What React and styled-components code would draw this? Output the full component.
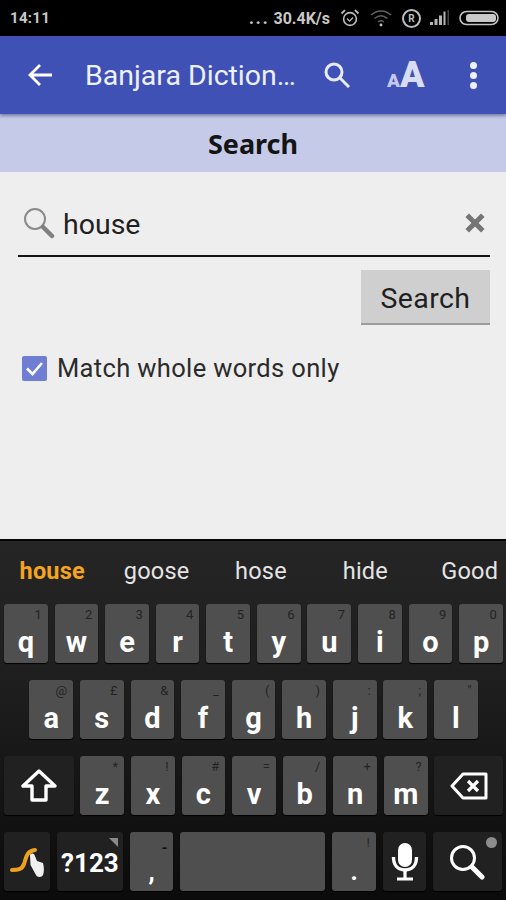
import React from "react";
import styled, { createGlobalStyle } from "styled-components";

const GlobalStyle = createGlobalStyle`
  html, body {
    margin: 0;
    padding: 0;
    background: #000;
  }
  * {
    box-sizing: border-box;
  }
`;

const ROW_1 = [
  ["q", "1"], ["w", "2"], ["e", "3"], ["r", "4"], ["t", "5"],
  ["y", "6"], ["u", "7"], ["i", "8"], ["o", "9"], ["p", "0"],
];
const ROW_2 = [
  ["a", "@"], ["s", "£"], ["d", "&"], ["f", "_"], ["g", "("],
  ["h", ")"], ["j", ":"], ["k", ";"], ["l", "\""],
];
const ROW_3 = [
  ["z", "*"], ["x", "!"], ["c", "#"], ["v", "="], ["b", "/"], ["n", "+"], ["m", "?"],
];
const SUGGESTIONS = ["house", "goose", "hose", "hide", "Good"];

function StatusIcons() {
  return (
    <>
      <svg width="20" height="20" viewBox="0 0 20 20" fill="none" stroke="#bdbdbd">
        <circle cx="10" cy="11" r="6.4" strokeWidth="1.6" />
        <path d="M7 10.5l2.6 2.6L13 9.5" strokeWidth="1.3" />
        <path d="M1.5 5.5L5 2.2M18.5 5.5L15 2.2" strokeWidth="1.8" />
      </svg>
      <WifiIcon width="22" height="18" viewBox="0 0 22 18" fill="none" stroke="#5f5f5f" strokeWidth="1.5">
        <path d="M1 6c6-5.4 14-5.4 20 0" />
        <path d="M4.5 9.5c4-3.4 9-3.4 13 0" />
        <path d="M8 13c1.8-1.4 4.2-1.4 6 0" />
        <circle cx="11" cy="16" r="1.4" fill="#c4c4c4" stroke="none" />
      </WifiIcon>
      <RegisteredBadge>R</RegisteredBadge>
      <svg width="20" height="16" viewBox="0 0 20 16">
        <path d="M0 15h3v-3H0zM4.5 15h3V9h-3zM9 15h3V5.5H9z" fill="#b5b5b5" />
        <path d="M13.5 15h2V1.5h-2z" fill="#b5b5b5" />
        <path d="M17.5 15H19V0h-1.5z" fill="#444" />
      </svg>
      <svg width="41" height="16" viewBox="0 0 41 16">
        <rect x="1" y="1.5" width="38" height="13" rx="6.5" fill="none" stroke="#c4c4c4" strokeWidth="1.6" />
        <rect x="7" y="4" width="30" height="8" rx="3" fill="#c9c9c9" />
      </svg>
    </>
  );
}

function GestureIcon() {
  return (
    <svg width="36" height="40" viewBox="0 0 36 40">
      <path d="M3 28c6 0 10-.5 12-6s2-13 11-14" fill="none" stroke="#f0a11d" strokeWidth="4" strokeLinecap="round" />
      <path
        d="M21 13c1-2 3.5-2 4.5 0l2.5 6 6 2c1.200 4 1.200 9 0 12-1 2.500-6 2.500-7 0l-5.500-10z"
        fill="#f0f0f0"
      />
    </svg>
  );
}

function App() {
  return (
    <>
      <GlobalStyle />
      <Screen>
        <StatusBar>
          <Clock>14:11</Clock>
          <StatusRight>
            <NetSpeed>
              <NetDots>...</NetDots>30.4K/s
            </NetSpeed>
            <StatusIcons />
          </StatusRight>
        </StatusBar>

        <AppBar>
          <BackButton>
            <svg width="26" height="24" viewBox="0 0 26 24" fill="none" stroke="#fff" strokeWidth="2.8">
              <path d="M25 12H3M13 2L3 12l10 10" />
            </svg>
          </BackButton>
          <Title>Banjara Diction…</Title>
          <ActionSearch>
            <svg width="26" height="26" viewBox="0 0 26 26" fill="none" stroke="#e8ebfa" strokeWidth="3">
              <circle cx="10" cy="10" r="8" />
              <path d="M15.5 15.5L25 25" />
            </svg>
          </ActionSearch>
          <FontSizeAction>
            <SmallA>A</SmallA>
            <BigA>A</BigA>
          </FontSizeAction>
          <MoreAction>
            <Dot />
            <Dot />
            <Dot />
          </MoreAction>
        </AppBar>

        <SubHeader>Search</SubHeader>

        <Body>
          <InputRow>
            <svg width="32" height="32" viewBox="0 0 32 32" fill="none">
              <circle cx="12" cy="12" r="10" stroke="#8a8a8a" strokeWidth="2" />
              <path d="M20 20l9 9" stroke="#808080" strokeWidth="4.5" strokeLinecap="round" />
            </svg>
            <InputText>house</InputText>
            <ClearIcon width="22" height="22" viewBox="0 0 24 24" fill="none">
              <path d="M3.5 3.5l17 17M20.5 3.5l-17 17" stroke="#757575" strokeWidth="5.5" />
            </ClearIcon>
          </InputRow>
          <ButtonRow>
            <SearchButton>Search</SearchButton>
          </ButtonRow>
          <CheckRow>
            <CheckBox>
              <svg width="19" height="17" viewBox="0 0 19 17" fill="none" stroke="#fff" strokeWidth="2.6">
                <path d="M2 8.5l5.5 5.5L17 3" />
              </svg>
            </CheckBox>
            <CheckLabel>Match whole words only</CheckLabel>
          </CheckRow>
        </Body>

        <Keyboard>
          <Suggestions>
            {SUGGESTIONS.map((word, i) => (
              <Suggestion key={word} $active={i === 0}>
                {word}
              </Suggestion>
            ))}
          </Suggestions>

          <KeyRow>
            {ROW_1.map(([letter, hint]) => (
              <Key key={letter}>
                <Hint>{hint}</Hint>
                {letter}
              </Key>
            ))}
          </KeyRow>

          <KeyRow $indent>
            {ROW_2.map(([letter, hint]) => (
              <Key key={letter}>
                <Hint>{hint}</Hint>
                {letter}
              </Key>
            ))}
          </KeyRow>

          <KeyRow>
            <FnKey $width={69.5}>
              <svg width="36" height="34" viewBox="0 0 36 34" fill="none" stroke="#fff" strokeWidth="3.4" strokeLinejoin="round">
                <path d="M18 2L2 17h9v14h14V17h9z" />
              </svg>
            </FnKey>
            {ROW_3.map(([letter, hint]) => (
              <Key key={letter}>
                <Hint>{hint}</Hint>
                {letter}
              </Key>
            ))}
            <FnKey $width={68.5}>
              <svg width="38" height="28" viewBox="0 0 38 28" fill="none" stroke="#fff">
                <path d="M13 2h23v24H13L2 14z" strokeWidth="3" strokeLinejoin="round" />
                <path d="M18 9l10 10M28 9L18 19" strokeWidth="3.2" />
              </svg>
            </FnKey>
          </KeyRow>

          <KeyRow>
            <FnKey $width={46}>
              <GestureIcon />
            </FnKey>
            <SymbolKey $width={66}>
              ?123
              <CornerMark />
            </SymbolKey>
            <Key $punct>
              <PunctHint>-</PunctHint>,
            </Key>
            <SpaceKey />
            <Key $punct>
              <Hint>!</Hint>.
            </Key>
            <FnKey $width={43.5}>
              <svg width="28" height="38" viewBox="0 0 28 38" fill="none" stroke="#fff">
                <rect x="7" y="0" width="14" height="24" rx="7" fill="#fff" stroke="none" />
                <path d="M2.5 14c0 8 4 13 11.5 13s11.5-5 11.5-13" strokeWidth="3.4" />
                <path d="M14 27v8M6 36h16" strokeWidth="3.2" />
              </svg>
            </FnKey>
            <FnKey $width={68.5}>
              <svg width="36" height="36" viewBox="0 0 36 36" fill="none" stroke="#fff">
                <circle cx="14" cy="14" r="11.5" strokeWidth="3" />
                <path d="M23 23l10 10" strokeWidth="5" strokeLinecap="round" />
              </svg>
              <EmojiMark />
            </FnKey>
          </KeyRow>
        </Keyboard>
      </Screen>
    </>
  );
}

export default App;

const Screen = styled.div`
  width: 506px;
  height: 900px;
  display: flex;
  flex-direction: column;
  overflow: hidden;
  background: #eeeeee;
  font-family: Roboto, "Liberation Sans", sans-serif;
`;

const StatusBar = styled.div`
  height: 36px;
  flex: none;
  display: flex;
  align-items: center;
  justify-content: space-between;
  padding: 0 6px 0 10px;
  background: #000;
  color: #c8c8c8;
`;

const Clock = styled.span`
  font-size: 15px;
  font-weight: 700;
  letter-spacing: 0.3px;
`;

const StatusRight = styled.div`
  display: flex;
  align-items: center;
  gap: 9px;
`;

const NetSpeed = styled.span`
  font-size: 16px;
  font-weight: 700;
  margin-right: 1px;
`;

const NetDots = styled.span`
  font-weight: 900;
  letter-spacing: 2px;
  margin-right: 4px;
`;

const WifiIcon = styled.svg`
  margin: 0 1px;
`;

const RegisteredBadge = styled.span`
  width: 19px;
  height: 19px;
  border: 2px solid #bdbdbd;
  border-radius: 50%;
  display: flex;
  align-items: center;
  justify-content: center;
  font-size: 10px;
  font-weight: 700;
  color: #bdbdbd;
`;

const AppBar = styled.header`
  height: 78px;
  flex: none;
  display: flex;
  align-items: center;
  background: #4051b5;
  color: #eef0fc;
  box-shadow: 0 2px 3px rgba(30, 35, 90, 0.45);
  position: relative;
  z-index: 1;
`;

const BackButton = styled.div`
  width: 85px;
  padding-left: 27px;
  display: flex;
  align-items: center;
`;

const Title = styled.h1`
  margin: 0;
  width: 239px;
  font-size: 28.5px;
  font-weight: 400;
  white-space: nowrap;
`;

const ActionSearch = styled.div`
  width: 63px;
  display: flex;
`;

const FontSizeAction = styled.div`
  width: 82.5px;
  display: flex;
  align-items: baseline;
  font-weight: 900;
  color: #d9ddf4;
  line-height: 1;
`;

const SmallA = styled.span`
  font-size: 19px;
  color: #c3c9ec;
`;

const BigA = styled.span`
  font-size: 36px;
`;

const MoreAction = styled.div`
  display: flex;
  flex-direction: column;
  gap: 3px;
`;

const Dot = styled.span`
  width: 7px;
  height: 7px;
  border-radius: 50%;
  background: #eef0fc;
`;

const SubHeader = styled.div`
  height: 58px;
  flex: none;
  display: flex;
  align-items: center;
  justify-content: center;
  background: #c5cae9;
  color: #141414;
  font-family: "Noto Sans", "Open Sans", sans-serif;
  font-size: 27px;
  font-weight: 700;
`;

const Body = styled.main`
  flex: 1;
  padding: 0 16px 0 18px;
  background: #eeeeee;
`;

const InputRow = styled.div`
  height: 85px;
  display: flex;
  align-items: center;
  padding: 18px 4px 0 5px;
  border-bottom: 2px solid #141414;
`;

const InputText = styled.span`
  flex: 1;
  margin-left: 8px;
  padding-top: 3px;
  font-size: 28.5px;
  color: #212121;
`;

const ClearIcon = styled.svg`
  flex: none;
`;

const ButtonRow = styled.div`
  display: flex;
  justify-content: flex-end;
  padding-top: 13px;
`;

const SearchButton = styled.button`
  width: 129px;
  height: 55px;
  padding: 3px 0 0;
  border: 0;
  border-bottom: 2px solid #9d9d9d;
  background: #cfcfcf;
  color: #1f1f1f;
  font-family: inherit;
  font-size: 28.5px;
  letter-spacing: 0.4px;
`;

const CheckRow = styled.label`
  display: flex;
  align-items: center;
  gap: 10px;
  margin-top: 28px;
  padding-left: 4px;
`;

const CheckBox = styled.span`
  width: 25px;
  height: 25px;
  flex: none;
  display: flex;
  align-items: center;
  justify-content: center;
  border-radius: 2px;
  background: #6f7dd3;
`;

const CheckLabel = styled.span`
  font-size: 25.5px;
  letter-spacing: 0.35px;
  color: #2b2b2b;
`;

const Keyboard = styled.section`
  height: 361px;
  flex: none;
  display: flex;
  flex-direction: column;
  gap: 17px;
  border-top: 2px solid #050505;
  background: linear-gradient(#252525, #1e1e1e 40%, #0b0b0b);
`;

const Suggestions = styled.div`
  height: 32px;
  margin-top: 14px;
  display: grid;
  grid-template-columns: repeat(5, 104.4px);
  align-items: center;
  overflow: hidden;
`;

const Suggestion = styled.span`
  text-align: center;
  font-size: 23.5px;
  font-weight: ${(props) => (props.$active ? 700 : 400)};
  color: ${(props) => (props.$active ? "#f4a41f" : "#e4e4e4")};
  letter-spacing: 0.2px;
`;

const KeyRow = styled.div`
  height: 59px;
  display: flex;
  gap: 6.9px;
  padding-left: ${(props) => (props.$indent ? "29.4px" : "4px")};
`;

const Key = styled.div`
  position: relative;
  width: 43.7px;
  flex: none;
  display: flex;
  align-items: flex-end;
  justify-content: center;
  padding-bottom: ${(props) => (props.$punct ? "7px" : "6px")};
  border-radius: 3px;
  background: #4f4f4f;
  box-shadow: 0 1px 1px #000;
  color: #fff;
  font-size: ${(props) => (props.$punct ? "25px" : "29px")};
  font-weight: 700;
  line-height: 1;
`;

const Hint = styled.span`
  position: absolute;
  top: 4px;
  right: 6px;
  font-size: 13px;
  font-weight: 400;
  color: #242424;
`;

const PunctHint = styled(Hint)`
  top: 9px;
  font-size: 15px;
  font-weight: 700;
  color: #111;
`;

const FnKey = styled.div`
  position: relative;
  width: ${(props) => props.$width}px;
  flex: none;
  display: flex;
  align-items: center;
  justify-content: center;
  border-radius: 3px;
  background: #212121;
  box-shadow: 0 1px 1px #000;
`;

const SymbolKey = styled(FnKey)`
  padding-top: 2px;
  color: #fff;
  font-size: 26px;
  font-weight: 700;
`;

const CornerMark = styled.span`
  position: absolute;
  top: 6px;
  right: 5px;
  border-style: solid;
  border-width: 0 9px 9px 0;
  border-color: transparent #8a8a8a transparent transparent;
`;

const SpaceKey = styled.div`
  width: 145px;
  flex: none;
  border-radius: 3px;
  background: #4f4f4f;
  box-shadow: 0 1px 1px #000;
`;

const EmojiMark = styled.span`
  position: absolute;
  top: 5px;
  right: 5px;
  width: 11px;
  height: 11px;
  border-radius: 50%;
  background: #8d8d8d;
`;
